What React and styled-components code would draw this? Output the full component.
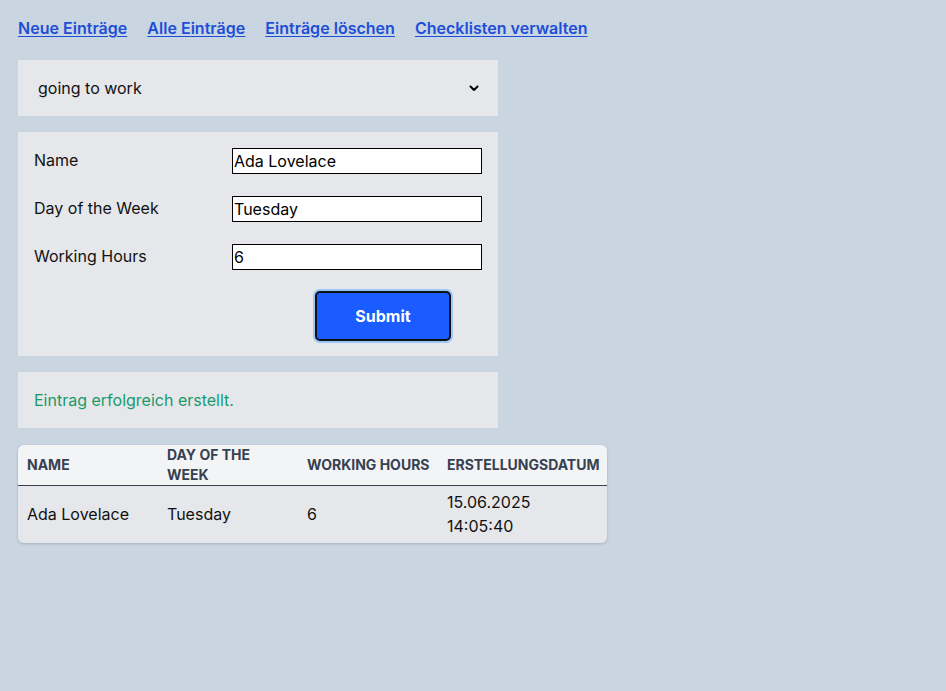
import React from "react";
import styled, { createGlobalStyle } from "styled-components";

const Global = createGlobalStyle`
  html, body { margin: 0; padding: 0; background: #c9d5e1; }
  body { font-family: Inter, "Noto Sans", Arial, sans-serif; color: #111827; }
  * { box-sizing: border-box; }
`;

const Page = styled.div`
  padding: 18px 18px;
  display: flex;
  flex-direction: column;
  align-items: flex-start;
`;

const Nav = styled.nav`
  display: flex;
  gap: 20px;
  height: 20px;
  align-items: center;
  margin-bottom: 22px;
`;

const NavLink = styled.a`
  color: #1d4ed8;
  font-size: 16px;
  font-weight: 600;
  letter-spacing: 0.02px;
  text-decoration: underline;
  text-underline-offset: 2px;
  cursor: pointer;
`;

const Panel = styled.div`
  width: 480px;
  background: #e5e7eb;
  padding: 16px;
  margin-bottom: 16px;
`;

const SelectWrap = styled.div`
  width: 480px;
  height: 56px;
  background: #e5e7eb;
  display: flex;
  align-items: center;
  padding: 0 18px 0 20px;
  margin-bottom: 16px;
  font-size: 16px;
  color: #111;
`;

const SelectText = styled.span`
  flex: 1;
`;

const FormGrid = styled.div`
  display: grid;
  grid-template-columns: 198px 250px;
  row-gap: 22px;
  align-items: center;
`;

const Label = styled.label`
  font-size: 16px;
  color: #111;
  line-height: 20px;
  align-self: start;
  padding-top: 2px;
`;

const Input = styled.input`
  height: 26px;
  width: 250px;
  border: 1px solid #000;
  background: #fff;
  font-family: inherit;
  font-size: 16px;
  padding: 0 1px;
  color: #000;
  outline: none;
`;

const ButtonRow = styled.div`
  grid-column: 2;
  padding-left: 83px;
  margin-top: -1px;
  margin-bottom: -1px;
`;

const Button = styled.button`
  display: block;
  width: 136px;
  height: 50px;
  background: #1a5cff;
  color: #fff;
  border: 2px solid #111;
  border-radius: 5px;
  font-family: inherit;
  font-size: 16px;
  font-weight: 700;
  box-shadow: 0 0 0 2px #9cc6f7;
  cursor: pointer;
`;

const Message = styled.div`
  color: #1a9a6a;
  font-size: 16px;
  line-height: 24px;
`;

const TableCard = styled.div`
  width: 589px;
  border-radius: 6px;
  overflow: hidden;
  box-shadow: 0 1px 3px rgba(0, 0, 0, 0.18);
  margin-top: 1px;
`;

const Table = styled.table`
  width: 100%;
  border-collapse: collapse;
  table-layout: fixed;
`;

const Th = styled.th`
  background: #f3f4f6;
  text-align: left;
  font-size: 14px;
  font-weight: 700;
  color: #374151;
  text-transform: uppercase;
  line-height: 20px;
  padding: 0 9px;
  height: 40px;
  border-bottom: 1px solid #374151;
  width: ${(p) => p.$w}px;
  white-space: ${(p) => (p.$wrap ? "normal" : "nowrap")};
`;

const Td = styled.td`
  background: #e5e7eb;
  font-size: 16px;
  color: #111;
  line-height: 24px;
  padding: 4px 9px 5px;
  vertical-align: middle;
`;

const Chevron = () => (
  <svg width="12" height="12" viewBox="0 0 12 12">
    <path d="M2.5 4.5 L6 8 L9.5 4.5" fill="none" stroke="#000" strokeWidth="2" strokeLinecap="round" strokeLinejoin="round" />
  </svg>
);

const fields = [
  { label: "Name", value: "Ada Lovelace" },
  { label: "Day of the Week", value: "Tuesday" },
  { label: "Working Hours", value: "6" },
];

export default function App() {
  return (
    <>
      <Global />
      <Page>
        <Nav>
          <NavLink>Neue Einträge</NavLink>
          <NavLink>Alle Einträge</NavLink>
          <NavLink>Einträge löschen</NavLink>
          <NavLink>Checklisten verwalten</NavLink>
        </Nav>
        <SelectWrap>
          <SelectText>going to work</SelectText>
          <Chevron />
        </SelectWrap>
        <Panel>
          <FormGrid>
            {fields.map((f) => (
              <React.Fragment key={f.label}>
                <Label>{f.label}</Label>
                <Input defaultValue={f.value} />
              </React.Fragment>
            ))}
            <ButtonRow>
              <Button>Submit</Button>
            </ButtonRow>
          </FormGrid>
        </Panel>
        <Panel>
          <Message>Eintrag erfolgreich erstellt.</Message>
        </Panel>
        <TableCard>
          <Table>
            <thead>
              <tr>
                <Th $w={140}>Name</Th>
                <Th $w={140} $wrap>Day of the Week</Th>
                <Th $w={140}>Working Hours</Th>
                <Th $w={169}>Erstellungsdatum</Th>
              </tr>
            </thead>
            <tbody>
              <tr>
                <Td>Ada Lovelace</Td>
                <Td>Tuesday</Td>
                <Td>6</Td>
                <Td>15.06.2025 14:05:40</Td>
              </tr>
            </tbody>
          </Table>
        </TableCard>
      </Page>
    </>
  );
}
